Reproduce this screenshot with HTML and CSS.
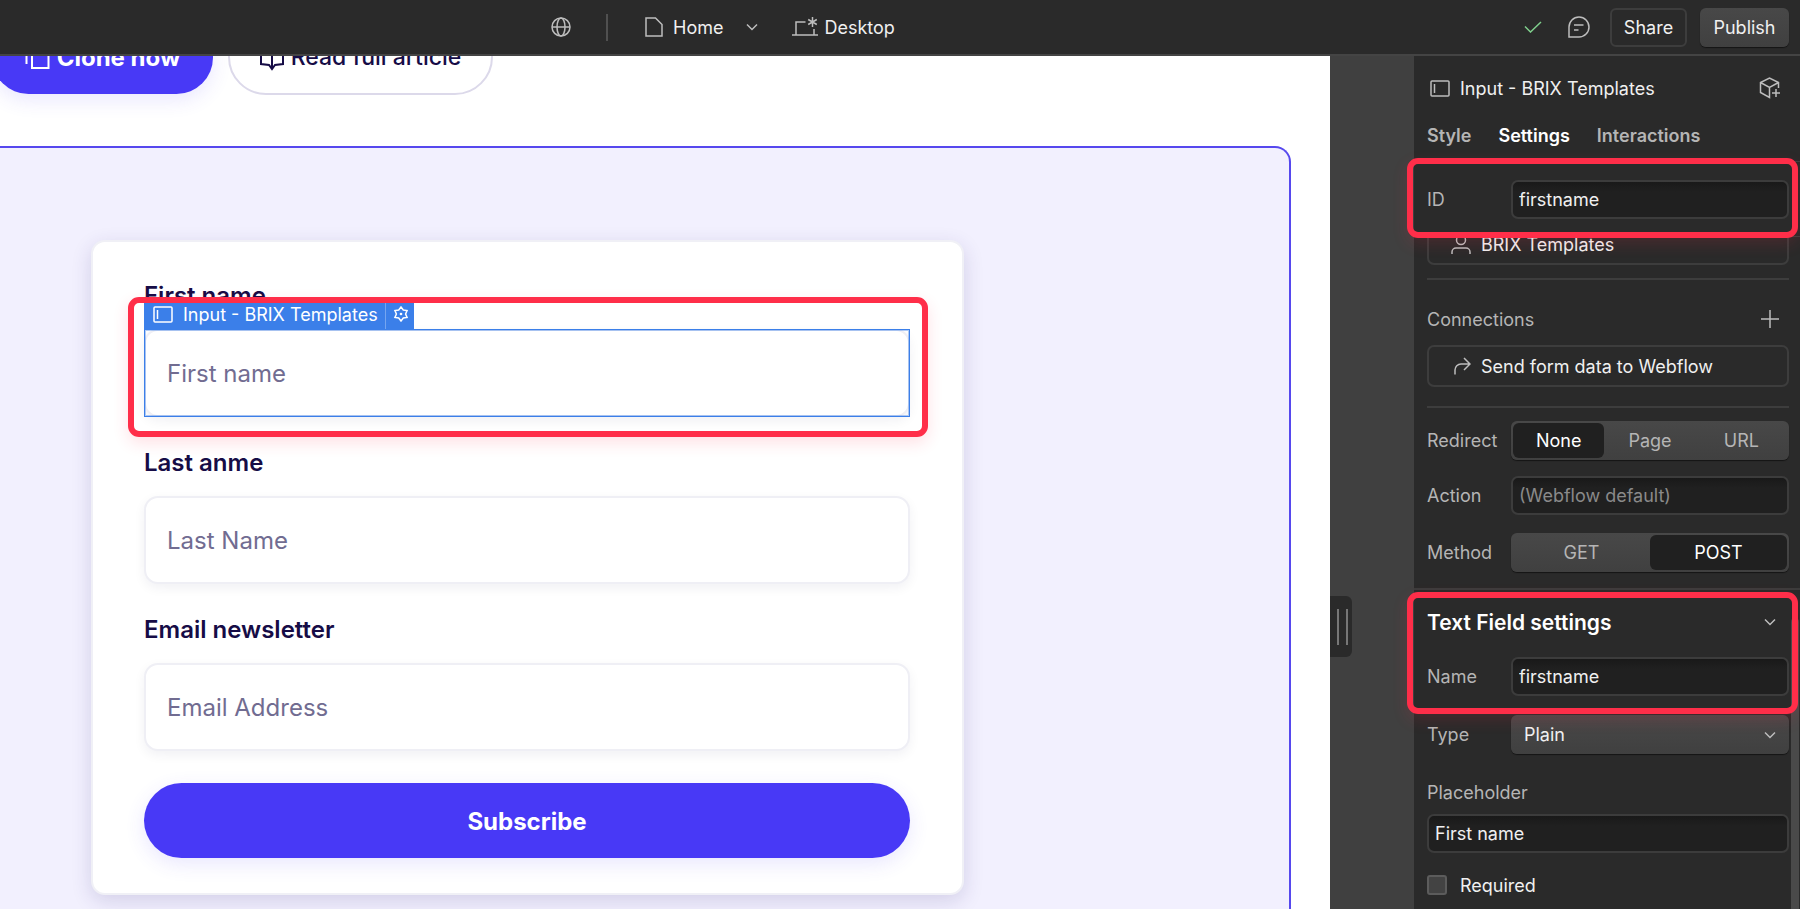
FILE: index.html
```html
<!DOCTYPE html>
<html lang="en">
<head>
    <meta charset="UTF-8">
    <meta name="viewport" content="width=device-width, initial-scale=1.0">
    <title>Designer</title>
    <link rel="stylesheet" href="styles.css">
</head>
<body>

    <!-- Top bar -->
    <header class="topbar">
        <button class="icon-button" aria-label="Locale">
            <svg width="20" height="20" viewBox="0 0 20 20"><circle cx="10" cy="10" r="9"/><ellipse cx="10" cy="10" rx="4" ry="9"/><path d="M1 10h18"/></svg>
        </button>
        <span class="topbar-divider"></span>
        <button class="topbar-item page-switch">
            <svg width="18" height="20" viewBox="0 0 18 20"><path d="M1 1h9.500l6.500 6.500V19H1z"/></svg>
            Home
            <svg class="chevron" width="12" height="8" viewBox="0 0 12 8"><path d="M1 1.500l5 5 5-5"/></svg>
        </button>
        <button class="topbar-item">
            <svg width="26" height="20" viewBox="0 0 26 20"><path d="M13.500 5H4v13M0 18h26M22 12v6M20.500 0v10M16.200 2.500l8.600 5M24.800 2.500l-8.600 5"/></svg>
            Desktop
        </button>
        <div class="topbar-actions">
            <svg class="saved" width="18" height="12" viewBox="0 0 18 12"><path d="M1 5.500l5.500 5.500L17 1"/></svg>
            <button class="icon-button" aria-label="Comments">
                <svg width="22" height="22" viewBox="0 0 22 22"><path d="M1 21V11a10 10 0 1 1 10 10zM6 9h9.500M6 14h4.500"/></svg>
            </button>
            <button class="share">Share</button>
            <button class="publish">Publish</button>
        </div>
    </header>

    <div class="workspace">

        <!-- Page being edited -->
        <main class="canvas">
            <div class="cta-row">
                <button class="cta cta-primary">
                    <svg width="25" height="28" viewBox="0 0 25 28"><path d="M1.500 21V3H17M7 8h16.500v17H7z"/></svg>
                    Clone now
                </button>
                <button class="cta cta-secondary">
                    <svg width="24" height="28" viewBox="0 0 24 28"><path d="M1 3h8l3 3 3-3h8v18l-8 1-3 4-3-4-8-1zM12 6v19"/></svg>
                    Read full article
                </button>
            </div>
            <section class="form-section">
                <form class="card">
                    <label for="first">First name</label>
                    <div class="selected">
                        <input type="text" id="first" placeholder="First name">
                        <div class="element-tag">
                            <svg width="20" height="17" viewBox="0 0 20 17"><rect x="1" y="1" width="18" height="15" rx="1"/><path d="M4.500 4v9"/></svg>
                            <span>Input - BRIX Templates</span>
                            <button type="button" class="tag-settings" aria-label="Element settings">
                                <svg width="16" height="16" viewBox="0 0 16 16"><path d="M8 1l2.300 3 3.760.5L12.600 8l1.460 3.500-3.760.5L8 15l-2.300-3-3.760-.5L3.400 8 1.940 4.500 5.700 4z"/><circle cx="8" cy="8" r=".6"/></svg>
                            </button>
                        </div>
                        <div class="highlight highlight-field"></div>
                    </div>
                    <label for="last">Last anme</label>
                    <input type="text" id="last" placeholder="Last Name">
                    <label for="email">Email newsletter</label>
                    <input type="email" id="email" placeholder="Email Address">
                    <button type="button" class="subscribe">Subscribe</button>
                </form>
            </section>
        </main>

        <div class="gutter">
            <div class="handle"></div>
        </div>

        <!-- Settings panel -->
        <aside class="panel">
            <div class="panel-header">
                <svg width="20" height="17" viewBox="0 0 20 17"><rect x="1" y="1" width="18" height="15" rx="1"/><path d="M4.500 4v9"/></svg>
                <span>Input - BRIX Templates</span>
                <button class="icon-button create" aria-label="Create component">
                    <svg width="22" height="22" viewBox="0 0 22 22"><path d="M19.500 11V5.500L10.500 1 1.500 5.500v10l9 5V10.500M1.500 5.500l9 5 9-5M17 12v8M13 16h8"/></svg>
                </button>
            </div>
            <nav class="tabs">
                <button>Style</button>
                <button class="active">Settings</button>
                <button>Interactions</button>
            </nav>
            <div class="id-row">
                <label for="elementId">ID</label>
                <input type="text" id="elementId" value="firstname">
                <div class="highlight highlight-id"></div>
            </div>

            <div class="form-settings">
                <button class="connection account">
                    <svg width="20" height="20" viewBox="0 0 20 20"><circle cx="10" cy="6" r="4.500"/><path d="M1 20v-2a4 4 0 0 1 4-4h10a4 4 0 0 1 4 4v2"/></svg>
                    BRIX Templates
                </button>
                <div class="connections">
                    Connections
                    <button class="icon-button add" aria-label="Add connection">
                        <svg width="18" height="18" viewBox="0 0 18 18"><path d="M9 0v18M0 9h18"/></svg>
                    </button>
                </div>
                <button class="connection">
                    <svg width="20" height="18" viewBox="0 0 20 18"><path d="M4 17.500V13a6 6 0 0 1 6-6h9M13 1l6 6-6 6"/></svg>
                    Send form data to Webflow
                </button>
                <div class="row redirect">
                    <span>Redirect</span>
                    <div class="segmented thirds">
                        <button class="on">None</button>
                        <button>Page</button>
                        <button>URL</button>
                    </div>
                </div>
                <div class="row">
                    <label for="action">Action</label>
                    <input type="text" id="action" placeholder="(Webflow default)">
                </div>
                <div class="row">
                    <span>Method</span>
                    <div class="segmented">
                        <button>GET</button>
                        <button class="on">POST</button>
                    </div>
                </div>
            </div>

            <div class="field-settings">
                <div class="name-group">
                    <h2>
                        Text Field settings
                        <svg class="chevron" width="12" height="8" viewBox="0 0 12 8"><path d="M1 1.500l5 5 5-5"/></svg>
                    </h2>
                    <div class="row">
                        <label for="fieldName">Name</label>
                        <input type="text" id="fieldName" value="firstname">
                    </div>
                    <div class="highlight highlight-name"></div>
                </div>
                <div class="row type-row">
                    <label for="fieldType">Type</label>
                    <div class="select">
                        <select id="fieldType">
                            <option>Plain</option>
                            <option>Email</option>
                            <option>Password</option>
                        </select>
                        <svg class="chevron" width="12" height="8" viewBox="0 0 12 8"><path d="M1 1.500l5 5 5-5"/></svg>
                    </div>
                </div>
                <label class="stacked-label" for="fieldPlaceholder">Placeholder</label>
                <input type="text" id="fieldPlaceholder" value="First name">
                <div class="check-row">
                    <input type="checkbox" id="required">
                    <label for="required">Required</label>
                </div>
                <div class="scrollbar"></div>
            </div>
        </aside>
    </div>

</body>
</html>
```
FILE: styles.css
```css
* {
    box-sizing: border-box;
}
body {
    margin: 0;
    height: 100vh;
    display: flex;
    flex-direction: column;
    overflow: hidden;
    background: #2a2a2a;
    font-family: Inter, "Liberation Sans", sans-serif;
    font-size: 18px;
    color: #f0f0f0;
}
button, input, select {
    font: inherit;
    color: inherit;
    margin: 0;
}
button {
    border: none;
    background: none;
    padding: 0;
    cursor: pointer;
    white-space: nowrap;
}
svg {
    display: block;
    flex: none;
    fill: none;
    stroke: #bdbdbd;
    stroke-width: 1.5;
}

/* Top bar */
.topbar {
    flex: none;
    height: 56px;
    padding: 0 11px 0 551px;
    border-bottom: 2px solid #444;
    display: flex;
    align-items: center;
}
.topbar-divider {
    width: 2px;
    height: 27px;
    margin: 0 37px 0 35px;
    background: #505050;
}
.topbar-item {
    display: flex;
    align-items: center;
    gap: 6px;
}
.page-switch {
    gap: 10px;
    margin-right: 34px;
}
.page-switch .chevron {
    margin-left: 13px;
}
.topbar-actions {
    margin-left: auto;
    display: flex;
    align-items: center;
}
.saved {
    margin-right: 26px;
    stroke: #7fcf8c;
}
.share, .publish {
    height: 39px;
    border-radius: 6px;
}
.share {
    width: 77px;
    margin: 0 13px 0 20px;
    border: 2px solid #3d3d3d;
}
.publish {
    width: 89px;
    background: linear-gradient(#484848, #404040);
    box-shadow: 0 1px 1px #151515;
}

.workspace {
    flex: 1;
    min-height: 0;
    display: flex;
}

/* Canvas */
.canvas {
    flex: 1;
    display: flex;
    flex-direction: column;
    overflow: hidden;
    background: #fff;
    color: #160c46;
    font-size: 24px;
}
.cta-row {
    display: flex;
    align-items: center;
    gap: 15px;
    margin: -37px 0 51px -8px;
}
.cta {
    display: flex;
    align-items: center;
    justify-content: center;
    gap: 7px;
    border-radius: 38px;
}
.cta svg {
    stroke: currentColor;
    stroke-width: 2;
}
.cta-primary {
    width: 221px;
    height: 73px;
    background: #4839f6;
    box-shadow: 0 6px 20px rgba(72, 57, 246, 0.12);
    color: #fff;
    font-weight: 700;
}
.cta-secondary {
    width: 265px;
    height: 76px;
    border: 2px solid #dcd9ea;
    font-size: 23px;
    font-weight: 500;
}
.form-section {
    flex: 1;
    margin-right: 39px;
    padding: 92px 325px 0 91px;
    border: 2px solid #5648ee;
    border-left: none;
    border-bottom: none;
    border-top-right-radius: 16px;
    background: #f2f0fe;
}
.card {
    display: flex;
    flex-direction: column;
    padding: 39px 52px 35px 51px;
    border: 2px solid #f0f0f6;
    border-radius: 14px;
    background: #fff;
    box-shadow: 0 6px 20px rgba(50, 35, 120, 0.16);
}
.card label {
    margin-bottom: 18px;
    line-height: 30px;
    font-weight: 600;
}
.card input {
    width: 100%;
    height: 88px;
    margin-bottom: 31px;
    padding: 0 21px;
    border: 2px solid #efeff5;
    border-radius: 14px;
    outline: none;
    box-shadow: 0 4px 12px rgba(20, 20, 60, 0.06);
}
.card input::placeholder {
    color: #716c91;
    opacity: 1;
}
.subscribe {
    height: 75px;
    margin-top: 1px;
    padding-top: 2px;
    border-radius: 38px;
    background: #4839f6;
    box-shadow: 0 6px 20px rgba(72, 57, 246, 0.12);
    color: #fff;
    font-weight: 700;
}
.selected {
    position: relative;
    height: 88px;
    margin-bottom: 31px;
}
.selected::after {
    content: "";
    position: absolute;
    inset: 0;
    border: 1px solid #3b7fe9;
    box-shadow: inset 0 0 0 1px rgba(59, 127, 233, 0.4);
    pointer-events: none;
}
.element-tag {
    position: absolute;
    left: 0;
    bottom: 100%;
    height: 30px;
    padding-left: 9px;
    display: flex;
    align-items: center;
    gap: 10px;
    background: #3b7fe9;
    color: #fff;
    font-size: 18px;
    white-space: nowrap;
}
.element-tag svg {
    stroke: #fff;
}
.element-tag span {
    margin-right: -3px;
}
.tag-settings {
    width: 29px;
    height: 30px;
    padding-left: 7px;
    border-left: 1px solid #75a5f0;
}

/* Red marker boxes */
.highlight {
    position: absolute;
    border: 6px solid #ff2e49;
    border-radius: 11px;
    box-shadow: 0 6px 16px rgba(255, 46, 73, 0.14);
    pointer-events: none;
}
.highlight-field {
    inset: -32px -18px -20px -16px;
}
.highlight-id {
    inset: -4px 2px -2px -7px;
}
.highlight-name {
    inset: 2px -9px -18px -20px;
}

/* Resize strip */
.gutter {
    flex: none;
    width: 84px;
    background: #404040;
}
.handle {
    width: 22px;
    height: 61px;
    margin-top: 540px;
    padding: 13px 7px;
    border-radius: 0 6px 6px 0;
    background: #2a2a2a;
}
.handle::before {
    content: "";
    display: block;
    width: 7px;
    height: 36px;
    border: solid #777;
    border-width: 0 2px;
}

/* Panel */
.panel {
    flex: none;
    display: flex;
    flex-direction: column;
    width: 386px;
    color: #b5b5b5;
}
.panel-header {
    height: 64px;
    padding: 0 19px 0 16px;
    display: flex;
    align-items: center;
    gap: 10px;
    color: #f0f0f0;
}
.create {
    margin-left: auto;
}
.tabs {
    display: flex;
    gap: 27px;
    height: 41px;
    padding: 0 13px 10px;
    font-weight: 600;
}
.tabs .active {
    color: #fff;
}
.panel input {
    flex: 1;
    min-width: 0;
    width: 100%;
    height: 39px;
    padding: 0 6px;
    border: 2px solid #3c3c3c;
    border-radius: 7px;
    outline: none;
    background: linear-gradient(#191919, #202020 10px);
    color: #f0f0f0;
}
.panel input::placeholder {
    color: #8a8a8a;
    opacity: 1;
}
.id-row {
    position: relative;
    z-index: 1;
    height: 76px;
    padding: 0 11px 0 13px;
    border: solid #404040;
    border-width: 1px 0;
    background: #2a2a2a;
    display: flex;
    align-items: center;
}
.id-row label, .row > label, .row > span {
    flex: none;
    width: 84px;
}
.form-settings {
    padding: 0 11px 16px 13px;
    border-bottom: 2px solid #3c3c3c;
}
.connection {
    display: flex;
    align-items: center;
    gap: 10px;
    width: 100%;
    height: 42px;
    padding-left: 22px;
    border: 2px solid #3d3d3d;
    border-radius: 7px;
    color: #f0f0f0;
}
.account {
    margin-top: -14px;
}
.connections {
    display: flex;
    align-items: center;
    height: 67px;
    margin-top: 13px;
    padding: 13px 10px 0 0;
    border-top: 2px solid #3d3d3d;
}
.add {
    margin-left: auto;
}
.row {
    display: flex;
    align-items: center;
    margin-top: 18px;
}
.redirect {
    margin-top: 19px;
    padding-top: 13px;
    border-top: 2px solid #3d3d3d;
}
.redirect + .row {
    margin-top: 16px;
}
.segmented {
    flex: 1;
    display: grid;
    grid-template-columns: 1fr 1fr;
    height: 39px;
    padding: 2px;
    border-radius: 6px;
    background: linear-gradient(#484848, #404040);
    box-shadow: 0 1px 1px #151515;
}
.thirds {
    grid-template-columns: 1fr 1fr 1fr;
}
.segmented .on {
    border-radius: 6px;
    background: #202020;
    color: #fff;
}
.field-settings {
    flex: 1;
    position: relative;
    padding: 0 11px 0 13px;
}
.name-group {
    position: relative;
    z-index: 1;
}
.name-group .row {
    margin-top: 3px;
}
.field-settings h2 {
    display: flex;
    align-items: center;
    justify-content: space-between;
    height: 64px;
    margin: 0;
    padding-right: 13px;
    color: #fff;
    font-size: 21px;
    font-weight: 600;
}
.type-row {
    margin-top: 19px;
}
.select {
    flex: 1;
    position: relative;
}
.select select {
    display: block;
    appearance: none;
    width: 100%;
    height: 39px;
    padding: 0 13px;
    border: none;
    border-radius: 6px;
    background: linear-gradient(#484848, #404040);
    box-shadow: 0 1px 1px #151515;
    color: #f0f0f0;
}
.select .chevron {
    position: absolute;
    right: 13px;
    top: 16px;
}
.stacked-label {
    display: block;
    margin-top: 18px;
    line-height: 42px;
}
.check-row {
    display: flex;
    align-items: center;
    gap: 13px;
    height: 24px;
    margin-top: 20px;
    color: #f0f0f0;
}
.panel .check-row input {
    appearance: none;
    flex: none;
    width: 20px;
    height: 20px;
    padding: 0;
    border: 2px solid #5c5c5c;
    border-radius: 3px;
    background: #434343;
}
.scrollbar {
    position: absolute;
    top: 28px;
    right: 1px;
    bottom: 0;
    width: 8px;
    border-radius: 4px 4px 0 0;
    background: #4a4a4a;
}
```
